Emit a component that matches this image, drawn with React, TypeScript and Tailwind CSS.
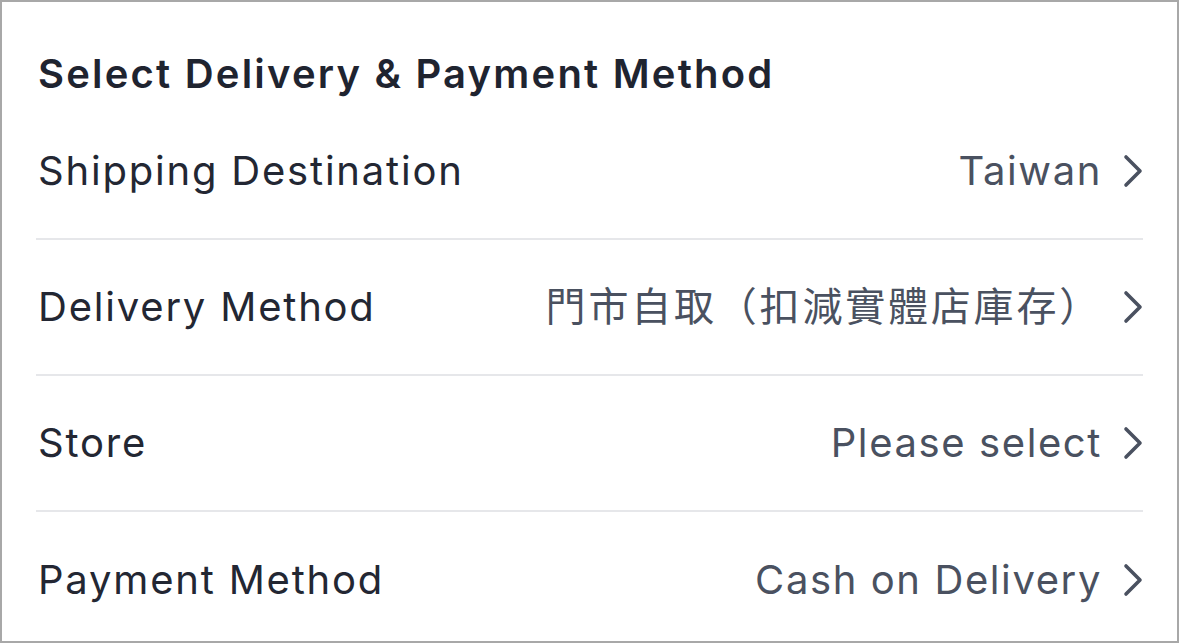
const rows = [
  { label: "Shipping Destination", value: "Taiwan", cjk: false },
  { label: "Delivery Method", value: "門市自取（扣減實體店庫存）", cjk: true },
  { label: "Store", value: "Please select", cjk: false },
  { label: "Payment Method", value: "Cash on Delivery", cjk: false },
];

function Chevron() {
  return (
    <svg
      viewBox="0 0 20 34"
      className="h-[34px] w-[20px] shrink-0"
      fill="none"
      stroke="currentColor"
      strokeWidth={3.6}
      strokeLinecap="round"
      strokeLinejoin="round"
    >
      <path d="M3 3 L17 17 L3 31" />
    </svg>
  );
}

export default function App() {
  return (
    <div className="h-[643px] w-[1179px] overflow-hidden border-2 border-[#a8a8a8] bg-white font-['Inter','Noto_Sans_CJK_TC',sans-serif]">
      <div className="px-[34px]">
        <h2 className="mb-[8px] pt-[50px] pl-[2px] text-[40px] leading-[44px] font-semibold tracking-[0.055em] text-[#1f2430]">
          Select Delivery &amp; Payment Method
        </h2>

        {rows.map(({ label, value, cjk }, idx) => (
          <div
            key={label}
            className={
              idx < rows.length - 1
                ? "flex h-[136px] items-center justify-between border-b-2 border-[#e6e7ea]"
                : "flex h-[136px] items-center justify-between"
            }
          >
            <span className="pl-[2px] text-[40px] tracking-[0.045em] text-[#232733]">
              {label}
            </span>
            <span className="flex items-center gap-[21px] text-[40px] text-[#4a5160]">
              <span className={cjk ? "tracking-[0.07em]" : "tracking-[0.04em]"}>
                {value}
              </span>
              <Chevron />
            </span>
          </div>
        ))}
      </div>
    </div>
  );
}
